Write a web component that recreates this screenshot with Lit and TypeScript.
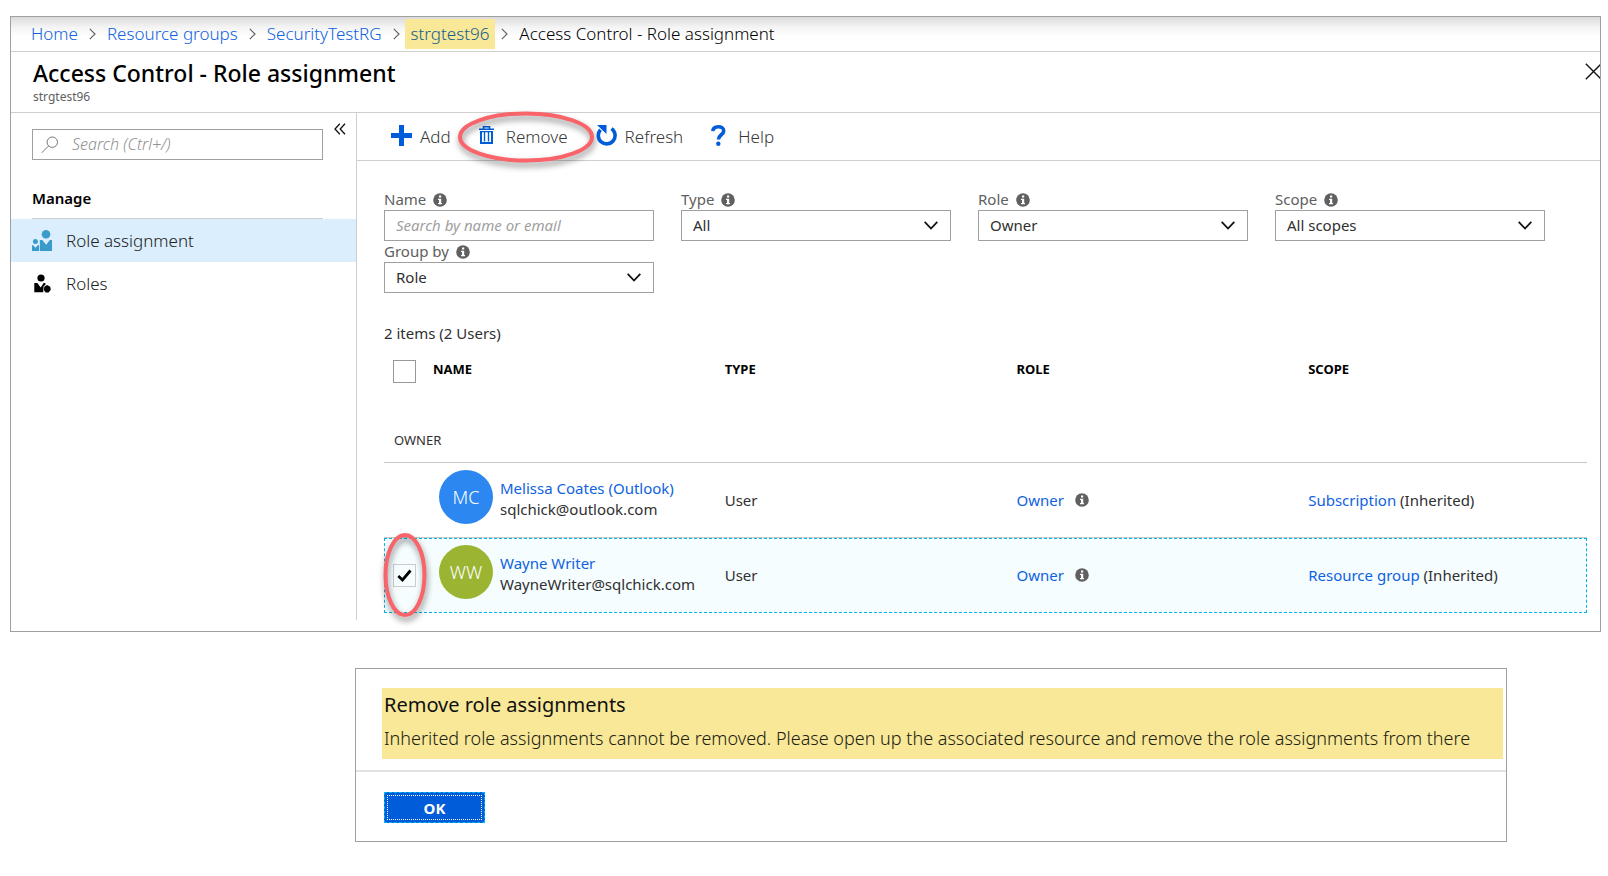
import { LitElement, html, css, nothing } from "lit";
import { customElement, property, state } from "lit/decorators.js";
import { classMap } from "lit/directives/class-map.js";

const base = css`
  *,
  *::before,
  *::after {
    box-sizing: border-box;
  }
  a {
    color: var(--link);
    text-decoration: none;
  }
  svg {
    display: block;
    flex: none;
  }
  button,
  input,
  select {
    font: inherit;
    color: inherit;
    margin: 0;
    border-radius: 0;
  }
`;

const infoIcon = html`<svg width="14" height="14" viewBox="0 0 14 14" role="img" aria-label="Info">
  <circle cx="7" cy="7" r="6.8" fill="#606060" />
  <path d="M6 2.6h2.2v2H6zM5 5.7h3.2v4.4H9v1.2H5v-1.2h1V6.9H5z" fill="#fff" />
</svg>`;

const ring = (w: number, h: number) => html`<svg
  class="ring"
  width=${w}
  height=${h}
  viewBox="0 0 ${w} ${h}"
  aria-hidden="true"
>
  <ellipse
    cx=${w / 2}
    cy=${h / 2}
    rx=${w / 2 - 2}
    ry=${h / 2 - 2}
    fill="none"
    stroke="#f8646a"
    stroke-width="4"
  />
</svg>`;

const ringStyles = css`
  .ring {
    position: absolute;
    top: 50%;
    left: 50%;
    transform: translate(-50%, -50%);
    overflow: visible;
    pointer-events: none;
    filter: drop-shadow(1px 4px 3px rgba(0, 0, 0, 0.45));
  }
`;

@customElement("bread-crumbs")
class BreadCrumbs extends LitElement {
  static styles = [
    base,
    css`
      :host {
        display: block;
        border-bottom: 1px solid #cfcfcf;
        background: linear-gradient(#dadada, #f4f4f4 10px, #fff 20px);
      }
      .trail {
        display: flex;
        align-items: center;
        gap: 11px;
        height: 34px;
        margin: 0;
        padding: 0 20px;
        list-style: none;
        font-size: 17px;
        line-height: 30px;
        font-weight: 320;
        white-space: nowrap;
      }
      .crumb {
        display: flex;
        align-items: center;
        gap: 11px;
      }
      .marked {
        gap: 6px;
        margin-left: -6px;
      }
      .marked a {
        padding: 0 6px;
        background: #f8e898;
        color: #17608a;
      }
    `,
  ];

  private trail = [
    { label: "Home", link: true },
    { label: "Resource groups", link: true },
    { label: "SecurityTestRG", link: true },
    { label: "strgtest96", link: true, marked: true },
    { label: "Access Control - Role assignment", link: false },
  ];

  render() {
    return html`<nav aria-label="Breadcrumb">
      <ol class="trail">
        ${this.trail.map(
          (c, i) => html`<li class=${classMap({ crumb: true, marked: !!c.marked })}>
            ${c.link ? html`<a href="#">${c.label}</a>` : html`<span>${c.label}</span>`}
            ${i < this.trail.length - 1
              ? html`<svg width="7" height="12" viewBox="0 0 7 12" aria-hidden="true">
                  <path d="M.8 .8 6 6 .8 11.2" fill="none" stroke="#666" stroke-width="1.2" />
                </svg>`
              : nothing}
          </li>`
        )}
      </ol>
    </nav>`;
  }
}

@customElement("side-menu")
class SideMenu extends LitElement {
  static styles = [
    base,
    css`
      :host {
        display: block;
        border-right: 1px solid #cfcfcf;
      }
      .top {
        display: flex;
        align-items: flex-start;
        gap: 11px;
        padding: 16px 10px 0 21px;
      }
      .search {
        display: flex;
        align-items: center;
        gap: 13px;
        flex: 1;
        height: 31px;
        padding: 0 8px;
        border: 1px solid #a0a0a0;
      }
      .search input {
        flex: 1;
        min-width: 0;
        padding: 0 0 2px;
        border: 0;
        outline: 0;
        background: none;
        font-size: 16px;
        font-weight: 320;
      }
      .search input::placeholder {
        color: #909090;
        font-style: italic;
        opacity: 1;
      }
      .collapse {
        padding: 0;
        border: 0;
        background: none;
        margin-top: -6px;
      }
      .heading {
        margin: 27px 33px 0 21px;
        padding-bottom: 9px;
        border-bottom: 1px solid #cfcfcf;
        font-size: 15px;
        line-height: 22px;
        font-weight: 600;
      }
      .list {
        margin: 0;
        padding: 0;
        list-style: none;
      }
      .item {
        display: flex;
        align-items: center;
        gap: 13px;
        height: 43px;
        padding: 0 21px;
        color: #202020;
        font-size: 17px;
        font-weight: 320;
      }
      .current {
        background: #daeefd;
      }
    `,
  ];

  render() {
    return html`
      <div class="top">
        <label class="search">
          <svg width="18" height="18" viewBox="0 0 18 18" role="img" aria-label="Search">
            <circle cx="11.3" cy="6.2" r="5.2" fill="none" stroke="#777" />
            <path d="M7.5 10 .8 16.8" fill="none" stroke="#777" />
          </svg>
          <input type="search" placeholder="Search (Ctrl+/)" />
        </label>
        <button class="collapse" aria-label="Collapse menu">
          <svg width="12" height="12" viewBox="0 0 12 12">
            <path
              d="M5.8 .8 1 6l4.8 5.2M11 .8 6.2 6 11 11.2"
              fill="none"
              stroke="#111"
              stroke-width="1.3"
            />
          </svg>
        </button>
      </div>
      <h2 class="heading">Manage</h2>
      <ul class="list">
        <li>
          <a class="item current" href="#" aria-current="page">
            <svg width="21" height="21" viewBox="0 0 21 21" fill="#3a9bcb" aria-hidden="true">
              <circle cx="14" cy="4.3" r="4.3" />
              <path d="M7.8 10h2.4l4 4.8 3.6-4.8H20v11H7.8z" />
              <circle cx="3.4" cy="11.6" r="2.5" />
              <path d="M0 15.2h1.2l2.3 2.6 2.2-2.6H7V21H0z" />
            </svg>
            Role assignment
          </a>
        </li>
        <li>
          <a class="item" href="#">
            <svg width="21" height="21" viewBox="0 0 21 21" fill="#000" aria-hidden="true">
              <circle cx="9" cy="5" r="3.6" />
              <path d="M2.3 10h3l3.4 4.4L11.6 10h1.6l.4 1.4-2 1.8-.4 6.1H2.3z" />
              <path d="M12.4 13.4 15.2 12l3 1.8.6 3-2.2 2.6h-3l-1.8-2.4z" />
            </svg>
            Roles
          </a>
        </li>
      </ul>
    `;
  }
}

@customElement("command-bar")
class CommandBar extends LitElement {
  static styles = [
    base,
    ringStyles,
    css`
      :host {
        display: flex;
        gap: 28px;
        height: 48px;
        padding: 0 34px;
        border-bottom: 1px solid #cfcfcf;
      }
      .command {
        position: relative;
        display: flex;
        align-items: center;
        gap: 8px;
        padding: 1px 0 0;
        border: 0;
        background: none;
        color: #383838;
        font-size: 17px;
        line-height: 24px;
        font-weight: 320;
      }
      .command .glyph {
        margin-bottom: 4px;
      }
      .command .ring {
        left: calc(50% + 3px);
      }
      .wide {
        gap: 12px;
      }
    `,
  ];

  render() {
    return html`
      <button class="command">
        <svg class="glyph" width="21" height="21" viewBox="0 0 21 21">
          <path d="M8 0h5v8h8v5h-8v8H8v-8H0V8h8z" fill="#015cda" />
        </svg>
        Add
      </button>
      <button class="command wide">
        <svg class="glyph" width="15" height="18" viewBox="0 0 15 18" fill="none" stroke="#015cda">
          <path d="M0 3.2h15M4.5 2.8V.8h6v2" stroke-width="1.6" />
          <path d="M2 5v12h11V5" stroke-width="2" />
          <path d="M1.5 5.6h12M5.5 6v9.5M9.5 6v9.5" stroke-width="1.4" />
        </svg>
        Remove ${ring(136, 51)}
      </button>
      <button class="command">
        <svg class="glyph" width="21" height="21" viewBox="0 0 21 21">
          <path
            d="M15.5 3.6A8.4 8.4 0 1 1 4.5 4.8"
            fill="none"
            stroke="#015cda"
            stroke-width="3.6"
          />
          <path d="M1 0h9.5v9z" fill="#015cda" />
        </svg>
        Refresh
      </button>
      <button class="command wide">
        <svg class="glyph" width="15" height="21" viewBox="0 0 15 21">
          <path
            d="M1.8 6.2C2 3.400 4.200 1.8 7.3 1.8c3.2 0 5.400 1.6 5.400 4.200 0 3.8-5.200 3.8-5.200 8.400"
            fill="none"
            stroke="#015cda"
            stroke-width="3.6"
          />
          <circle cx="7.3" cy="18.8" r="2.2" fill="#015cda" />
        </svg>
        Help
      </button>
    `;
  }
}

@customElement("filter-panel")
class FilterPanel extends LitElement {
  static styles = [
    base,
    css`
      :host {
        display: grid;
        grid-template-columns: repeat(4, minmax(0, 1fr));
        gap: 1px 27px;
        padding-right: 42px;
        font-size: 15px;
      }
      .label {
        display: flex;
        align-items: center;
        gap: 7px;
        height: 20px;
        line-height: 18px;
        color: #606060;
      }
      .text {
        padding-bottom: 2px;
      }
      .box {
        display: grid;
        align-items: center;
        height: 31px;
        border: 1px solid #a0a0a0;
      }
      .box > * {
        grid-area: 1 / 1;
      }
      .box svg {
        justify-self: end;
        margin-right: 12px;
        pointer-events: none;
      }
      .control {
        appearance: none;
        width: 100%;
        height: 29px;
        padding: 0 11px 2px;
        border: 0;
        outline: 0;
        background: none;
        color: #303030;
      }
      .control::placeholder {
        color: #a0a0a0;
        font-style: italic;
        opacity: 1;
      }
    `,
  ];

  private filters = [
    { id: "type", label: "Type", value: "All" },
    { id: "role", label: "Role", value: "Owner" },
    { id: "scope", label: "Scope", value: "All scopes" },
    { id: "group", label: "Group by", value: "Role" },
  ];

  render() {
    return html`
      <div>
        <label class="label" for="name"><span class="text">Name</span>${infoIcon}</label>
        <div class="box">
          <input class="control" id="name" type="text" placeholder="Search by name or email" />
        </div>
      </div>
      ${this.filters.map(
        (f) => html`<div>
          <label class="label" for=${f.id}><span class="text">${f.label}</span>${infoIcon}</label>
          <div class="box">
            <select class="control" id=${f.id}>
              <option>${f.value}</option>
            </select>
            <svg width="14" height="9" viewBox="0 0 14 9" aria-hidden="true">
              <path d="M.7 .8 7 7.5 13.3 .8" fill="none" stroke="#111" stroke-width="1.8" />
            </svg>
          </div>
        </div>`
      )}
    `;
  }
}

interface Assignment {
  initials: string;
  tone: string;
  name: string;
  email: string;
  scope: string;
}

@customElement("assignment-table")
class AssignmentTable extends LitElement {
  static styles = [
    base,
    ringStyles,
    css`
      :host {
        display: block;
        font-size: 15px;
        color: #303030;
      }
      .count {
        margin: 0;
        line-height: 22px;
      }
      .table {
        width: 100%;
        margin-top: 6px;
        border-collapse: separate;
        border-spacing: 0;
        table-layout: fixed;
      }
      .pick-col {
        width: 49px;
      }
      .data-col {
        width: 24.25%;
      }
      th,
      td {
        padding: 0;
        text-align: left;
      }
      thead th {
        height: 72px;
        padding-top: 9px;
        vertical-align: top;
        font-size: 13px;
        line-height: 20px;
        font-weight: 700;
        color: #000;
      }
      .group {
        height: 41px;
        padding: 8px 10px 0;
        border-bottom: 1px solid #c8c8c8;
        vertical-align: top;
        font-size: 13px;
        line-height: 20px;
        font-weight: 400;
      }
      .row td {
        height: 75px;
        border-bottom: 1px solid #c8c8c8;
      }
      .selected td {
        border-bottom-color: transparent;
      }
      .selected {
        background: #f5fdff;
        outline: 1px dashed #00b4ea;
        outline-offset: -1px;
      }
      .pick {
        position: relative;
        display: grid;
        width: 23px;
        height: 23px;
        margin-left: 9px;
      }
      thead .pick {
        margin-top: 1px;
      }
      .pick > :not(.ring) {
        grid-area: 1 / 1;
        place-self: center;
      }
      .tick {
        appearance: none;
        width: 23px;
        height: 23px;
        border: 1px solid #999;
        background: #fff;
      }
      .tick:checked {
        border-color: #ccc;
        background: none;
      }
      .pick .mark {
        pointer-events: none;
      }
      .row .person-cell {
        vertical-align: top;
        padding: 7px 0 0 6px;
      }
      .person {
        display: flex;
        gap: 7px;
      }
      .avatar {
        display: grid;
        place-items: center;
        width: 54px;
        height: 54px;
        border-radius: 50%;
        color: #fff;
        font-size: 18px;
        font-weight: 320;
      }
      .blue {
        background: #2c88f0;
      }
      .green {
        background: #9bb431;
      }
      .names {
        display: flex;
        flex-direction: column;
        padding-top: 8px;
        line-height: 21px;
      }
      .role {
        display: flex;
        align-items: center;
        gap: 11px;
      }
    `,
  ];

  private people: Assignment[] = [
    {
      initials: "MC",
      tone: "blue",
      name: "Melissa Coates (Outlook)",
      email: "sqlchick@outlook.com",
      scope: "Subscription",
    },
    {
      initials: "WW",
      tone: "green",
      name: "Wayne Writer",
      email: "WayneWriter@sqlchick.com",
      scope: "Resource group",
    },
  ];

  @state() private selected = "Wayne Writer";

  private row(p: Assignment) {
    const on = p.name === this.selected;
    return html`<tr class=${classMap({ row: true, selected: on })}>
      <td>
        ${on
          ? html`<div class="pick">
              <input class="tick" type="checkbox" checked aria-label="Select ${p.name}" />
              <svg class="mark" width="15" height="13" viewBox="0 0 15 13" aria-hidden="true">
                <path d="M1.3 7 5.5 11 13.5 1.5" fill="none" stroke="#000" stroke-width="2.8" />
              </svg>
              ${ring(43, 84)}
            </div>`
          : nothing}
      </td>
      <td class="person-cell">
        <div class="person">
          <span class="avatar ${p.tone}">${p.initials}</span>
          <span class="names"><a href="#">${p.name}</a><span>${p.email}</span></span>
        </div>
      </td>
      <td>User</td>
      <td><span class="role"><a href="#">Owner</a>${infoIcon}</span></td>
      <td><a href="#">${p.scope}</a> (Inherited)</td>
    </tr>`;
  }

  render() {
    return html`
      <p class="count">2 items (2 Users)</p>
      <table class="table">
        <colgroup>
          <col class="pick-col" />
          <col class="data-col" />
          <col class="data-col" />
          <col class="data-col" />
          <col />
        </colgroup>
        <thead>
          <tr>
            <th>
              <div class="pick"><input class="tick" type="checkbox" aria-label="Select all" /></div>
            </th>
            <th>NAME</th>
            <th>TYPE</th>
            <th>ROLE</th>
            <th>SCOPE</th>
          </tr>
        </thead>
        <tbody>
          <tr>
            <th class="group" colspan="5">OWNER</th>
          </tr>
          ${this.people.map((p) => this.row(p))}
        </tbody>
      </table>
    `;
  }
}

@customElement("remove-dialog")
class RemoveDialog extends LitElement {
  static styles = [
    base,
    css`
      :host {
        display: block;
        border: 1px solid #a0a0a0;
        background: #fff;
      }
      .message {
        margin: 19px 3px 11px 26px;
        padding: 1px 2px 4px;
        background: #f8e898;
      }
      .title {
        margin: 0;
        font-size: 20px;
        line-height: 32px;
        font-weight: 400;
        color: #111;
      }
      .text {
        margin: 0;
        font-size: 18px;
        line-height: 34px;
        font-weight: 340;
        color: #202010;
      }
      .actions {
        padding: 20px 28px 18px;
        border-top: 2px solid #e2e2e2;
      }
      .ok {
        display: block;
        width: 101px;
        height: 31px;
        padding: 2px;
        border: 1px dashed #00b4f0;
        background: #015cda;
        color: #fff;
        font-size: 15px;
        font-weight: 700;
      }
      .face {
        display: grid;
        place-items: center;
        height: 100%;
        border: 1px dotted #fff;
      }
    `,
  ];

  render() {
    return html`
      <div class="message">
        <h2 class="title">Remove role assignments</h2>
        <p class="text">
          Inherited role assignments cannot be removed. Please open up the associated resource and
          remove the role assignments from there
        </p>
      </div>
      <div class="actions">
        <button class="ok"><span class="face">OK</span></button>
      </div>
    `;
  }
}

@customElement("app-root")
class AppRoot extends LitElement {
  @property() heading = "Access Control - Role assignment";

  static styles = [
    base,
    css`
      :host {
        --link: #0f62e0;
        display: block;
        padding: 16px 7px 33px 10px;
        background: #fff;
        color: #000;
        font-family: "Noto Sans", "Open Sans", sans-serif;
      }
      .blade {
        padding-bottom: 11px;
        border: 1px solid #a0a0a0;
        overflow: hidden;
      }
      .header {
        display: flex;
        justify-content: space-between;
        align-items: flex-start;
        height: 61px;
        padding: 5px 0 0 22px;
        border-bottom: 1px solid #cfcfcf;
      }
      .title {
        margin: 0;
        font-size: 23px;
        line-height: 32px;
        font-weight: 500;
      }
      .subtitle {
        margin: 0;
        font-size: 12px;
        line-height: 16px;
        color: #606060;
      }
      .close {
        padding: 0;
        border: 0;
        background: none;
        margin: 6px -2px 0 0;
      }
      .body {
        display: grid;
        grid-template-columns: 346px minmax(0, 1fr);
      }
      .content {
        display: grid;
        gap: 29px;
        padding: 29px 13px 7px 27px;
      }
      .dialog {
        margin: 36px 94px 0 345px;
      }
    `,
  ];

  render() {
    return html`
      <main class="blade">
        <bread-crumbs></bread-crumbs>
        <header class="header">
          <div>
            <h1 class="title">${this.heading}</h1>
            <p class="subtitle">strgtest96</p>
          </div>
          <button class="close" aria-label="Close">
            <svg width="17" height="17" viewBox="0 0 17 17">
              <path d="M.8 .8 16.2 16.2M16.2 .8 .8 16.2" stroke="#111" stroke-width="1.3" />
            </svg>
          </button>
        </header>
        <div class="body">
          <side-menu></side-menu>
          <section>
            <command-bar></command-bar>
            <div class="content">
              <filter-panel></filter-panel>
              <assignment-table></assignment-table>
            </div>
          </section>
        </div>
      </main>
      <remove-dialog class="dialog" role="dialog" aria-label="Remove role assignments"></remove-dialog>
    `;
  }
}
